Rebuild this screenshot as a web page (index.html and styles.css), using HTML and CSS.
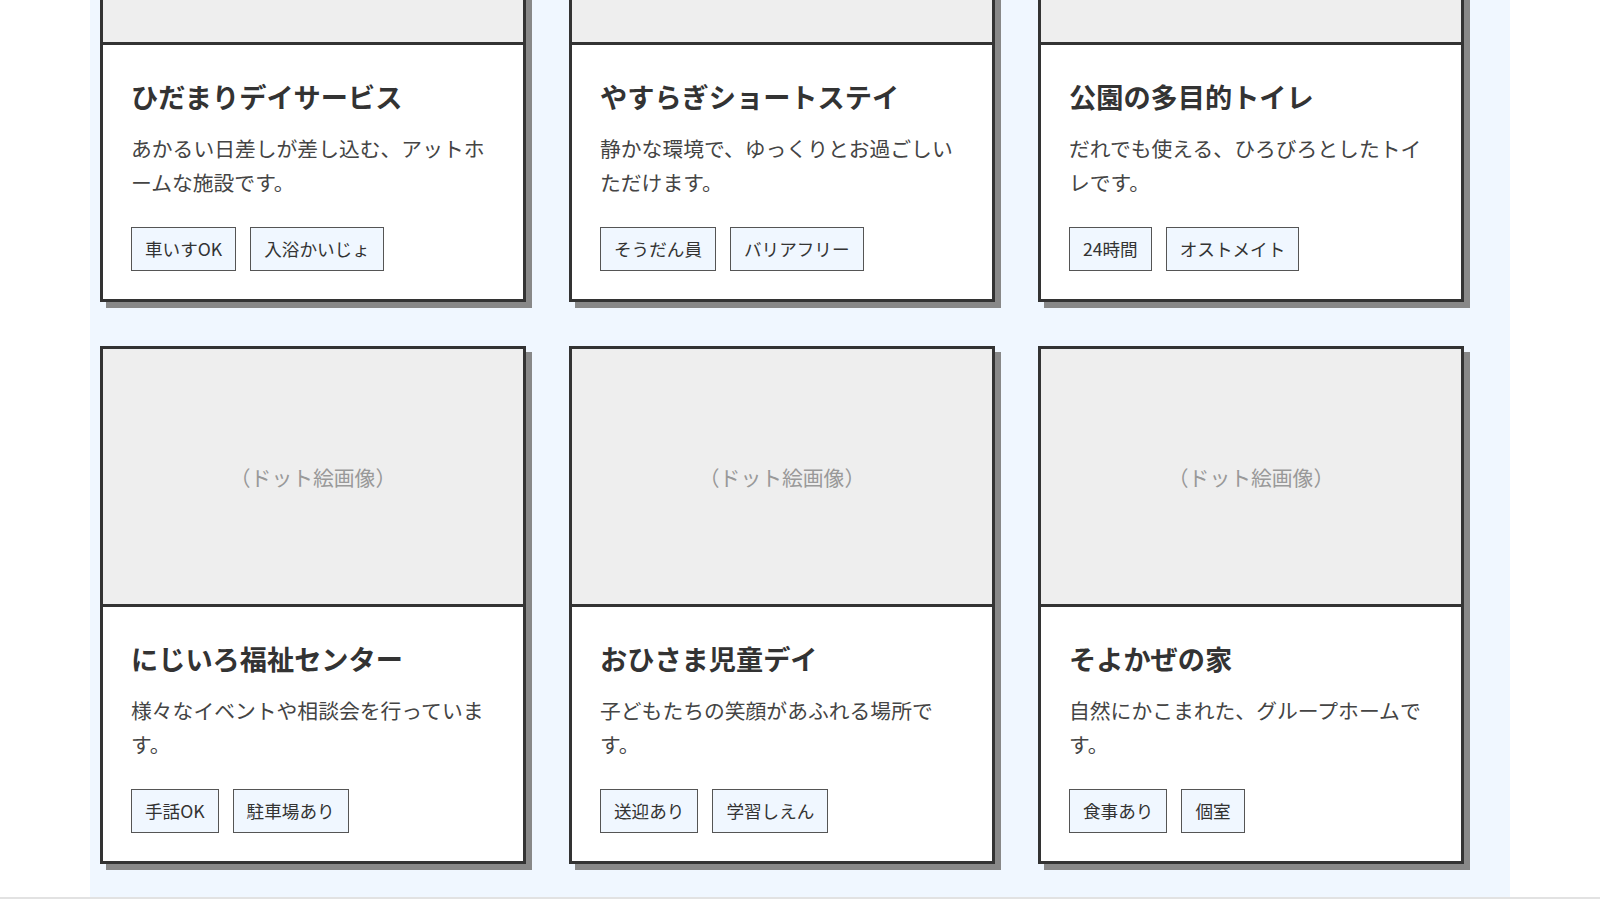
FILE: index.html
```html
<!DOCTYPE html>
<html lang="ja">
<head>
<meta charset="utf-8">
<title>施設一覧</title>
<link rel="stylesheet" href="styles.css">
</head>
<body>
<main class="facilities">
  <div class="grid">
    <article class="card">
      <div class="thumb">（ドット絵画像）</div>
      <div class="body">
        <h3 class="title">ひだまりデイサービス</h3>
        <p class="desc">あかるい日差しが差し込む、アットホームな施設です。</p>
        <div class="tags"><span class="tag">車いすOK</span><span class="tag">入浴かいじょ</span></div>
      </div>
    </article>
    <article class="card">
      <div class="thumb">（ドット絵画像）</div>
      <div class="body">
        <h3 class="title">やすらぎショートステイ</h3>
        <p class="desc">静かな環境で、ゆっくりとお過ごしいただけます。</p>
        <div class="tags"><span class="tag">そうだん員</span><span class="tag">バリアフリー</span></div>
      </div>
    </article>
    <article class="card">
      <div class="thumb">（ドット絵画像）</div>
      <div class="body">
        <h3 class="title">公園の多目的トイレ</h3>
        <p class="desc">だれでも使える、ひろびろとしたトイレです。</p>
        <div class="tags"><span class="tag">24時間</span><span class="tag">オストメイト</span></div>
      </div>
    </article>
    <article class="card">
      <div class="thumb">（ドット絵画像）</div>
      <div class="body">
        <h3 class="title">にじいろ福祉センター</h3>
        <p class="desc">様々なイベントや相談会を行っています。</p>
        <div class="tags"><span class="tag">手話OK</span><span class="tag">駐車場あり</span></div>
      </div>
    </article>
    <article class="card">
      <div class="thumb">（ドット絵画像）</div>
      <div class="body">
        <h3 class="title">おひさま児童デイ</h3>
        <p class="desc">子どもたちの笑顔があふれる場所です。</p>
        <div class="tags"><span class="tag">送迎あり</span><span class="tag">学習しえん</span></div>
      </div>
    </article>
    <article class="card">
      <div class="thumb">（ドット絵画像）</div>
      <div class="body">
        <h3 class="title">そよかぜの家</h3>
        <p class="desc">自然にかこまれた、グループホームです。</p>
        <div class="tags"><span class="tag">食事あり</span><span class="tag">個室</span></div>
      </div>
    </article>
  </div>
</main>
<footer class="footer"></footer>
</body>
</html>
```

FILE: styles.css
```css
html, body {
  margin: 0;
  padding: 0;
  background: #ffffff;
  overflow: hidden;
}

body {
  font-family: "Noto Sans CJK JP", "Noto Sans", sans-serif;
  color: #333333;
}

.facilities {
  width: 1420px;
  margin: -248px auto 0;
  background: #f0f7ff;
  padding: 32px 10px 33px;
  box-sizing: border-box;
}

.grid {
  display: grid;
  grid-template-columns: repeat(3, 426px);
  column-gap: 43px;
  row-gap: 44px;
}

.card {
  background: #ffffff;
  border: 3px solid #333333;
  box-shadow: 6px 6px 0 #888888;
  display: flex;
  flex-direction: column;
}

.thumb {
  height: 255px;
  background: #eeeeee;
  border-bottom: 3px solid #333333;
  display: flex;
  align-items: center;
  justify-content: center;
  color: #999999;
  font-size: 20.8px;
}

.body {
  padding: 28px;
}

.title {
  margin: 4px 0 16px;
  font-size: 27.2px;
  line-height: 38px;
  font-weight: 700;
  color: #333333;
}

.desc {
  margin: 0 0 28px;
  font-size: 20.8px;
  line-height: 34px;
  color: #444444;
}

.tags {
  display: flex;
  gap: 14px;
}

.tag {
  display: inline-block;
  padding: 8px 13px;
  line-height: 26px;
  font-size: 17.6px;
  background: #f0f7ff;
  border: 1px solid #555555;
  color: #333333;
}

.footer {
  border-top: 2px solid #e2e2e2;
  height: 40px;
}
```
